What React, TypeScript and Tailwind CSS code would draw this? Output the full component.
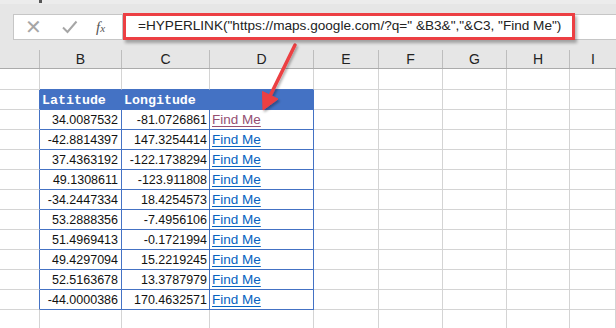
import React from "react";

const cols = [
  { key: "A", w: "w-[40px]" },
  { key: "B", w: "w-[82px]" },
  { key: "C", w: "w-[88px]" },
  { key: "D", w: "w-[104px]" },
  { key: "E", w: "w-[65px]" },
  { key: "F", w: "w-[64px]" },
  { key: "G", w: "w-[64px]" },
  { key: "H", w: "w-[63px]" },
  { key: "I", w: "flex-1" },
];

const rows: [string, string][] = [
  ["34.0087532", "-81.0726861"],
  ["-42.8814397", "147.3254414"],
  ["37.4363192", "-122.1738294"],
  ["49.1308611", "-123.911808"],
  ["-34.2447334", "18.4254573"],
  ["53.2888356", "-7.4956106"],
  ["51.4969413", "-0.1721994"],
  ["49.4297094", "15.2219245"],
  ["52.5163678", "13.3787979"],
  ["-44.0000386", "170.4632571"],
];

const cellFont = { fontFamily: '"Liberation Sans", Arial, sans-serif' };

function GridRow({
  h,
  children,
}: {
  h: string;
  children: (col: string, i: number) => React.ReactNode;
}) {
  return (
    <div className={`flex ${h}`}>
      {cols.map((c, i) => (
        <div key={c.key} className={`${c.w} shrink-0 h-full`}>
          {children(c.key, i)}
        </div>
      ))}
    </div>
  );
}

export default function App() {
  return (
    <div className="w-[616px] h-[328px] overflow-hidden relative bg-white" style={cellFont}>
      {/* top strip */}
      <div className="h-[4px] bg-[#ececec] relative">
        <div className="absolute left-[39px] top-0 w-[3px] h-[3px] bg-[#555]" />
      </div>

      {/* formula bar */}
      <div className="h-[44px] bg-[#e6e6e6] flex items-start pt-[9px] pl-[13px]">
        <div className="w-[110px] h-[26px] mt-[1px] bg-white border border-[#c6c6c6] flex items-center">
          <span className="w-[38px] text-center text-[20px] leading-none text-[#a6a6a6] font-light">✕</span>
          <svg width="18" height="16" viewBox="0 0 18 16" className="ml-[9px]">
            <path d="M2 8.5 L6.5 13 L15.5 2.5" fill="none" stroke="#a6a6a6" strokeWidth="2" />
          </svg>
          <span
            className="ml-[17px] text-[15px] italic text-[#555]"
            style={{ fontFamily: '"Liberation Serif", serif' }}
          >
            f<span className="text-[11px]">x</span>
          </span>
        </div>
        <div className="w-[452px] h-[27px] bg-white border-[3px] border-[#ec3f43] shadow-[2px_3px_3px_rgba(0,0,0,0.3)] flex items-center pl-[12px] relative z-10">
          <span className="text-[13.6px] text-[#222] whitespace-nowrap">
            =HYPERLINK("https://maps.google.com/?q=" &amp;B3&amp;","&amp;C3, "Find Me")
          </span>
        </div>
        <div className="flex-1 h-[26px] mt-[1px] bg-white border-y border-[#c6c6c6]" />
      </div>

      {/* column headers */}
      <div className="flex h-[21px] bg-[#e6e6e6] border-b border-[#ababab]">
        {cols.map((c, i) => (
          <div key={c.key} className={`${c.w} shrink-0 h-full pt-[2px]`}>
            <div
              className={`h-full flex items-center justify-center text-[14px] text-[#222] ${
                i < cols.length - 1 ? "border-r border-[#bdbdbd]" : ""
              }`}
            >
              {i === 0 ? "" : c.key}
            </div>
          </div>
        ))}
      </div>

      {/* row above the table */}
      <GridRow h="h-[21px]">
        {(k) => (
          <div
            className={`h-full border-r border-b ${
              k === "B" || k === "C" || k === "D" ? "border-b-[#4472c4]" : "border-b-[#d4d4d4]"
            } border-r-[#d4d4d4]`}
          />
        )}
      </GridRow>

      {/* table header row */}
      <GridRow h="h-[20px]">
        {(k) => {
          const inTable = k === "B" || k === "C" || k === "D";
          if (inTable)
            return (
              <div
                className="h-full bg-[#4472c4] border-b border-[#4472c4] flex items-end pl-[2px] pb-[2px] text-white font-bold text-[13.3px] leading-none"
                style={{ fontFamily: '"Liberation Mono", monospace' }}
              >
                {k === "B" ? "Latitude" : k === "C" ? "Longitude" : ""}
              </div>
            );
          return (
            <div
              className={`h-full border-r border-b border-b-[#d4d4d4] ${
                k === "A" ? "border-r-[#4472c4]" : "border-r-[#d4d4d4]"
              }`}
            />
          );
        }}
      </GridRow>

      {/* data rows */}
      {rows.map(([lat, lng], r) => (
        <GridRow key={r} h="h-[20px]">
          {(k) => {
            const inTable = k === "B" || k === "C" || k === "D";
            const rBorder =
              k === "A" || inTable ? "border-r-[#4472c4]" : "border-r-[#d4d4d4]";
            const bBorder = inTable ? "border-b-[#4472c4]" : "border-b-[#d4d4d4]";
            return (
              <div
                className={`h-full border-r border-b ${rBorder} ${bBorder} flex items-end pb-[3px] leading-none text-[#111] ${
                  k === "B" ? "justify-end pr-[3px]" : k === "C" ? "justify-end pr-[2px]" : "pl-[2px]"
                }`}
              >
                {k === "B" && <span className="text-[12.5px]">{lat}</span>}
                {k === "C" && <span className="text-[12.5px]">{lng}</span>}
                {k === "D" && (
                  <span
                    className={`text-[13.5px] underline underline-offset-[2px] ${
                      r === 0 ? "text-[#954f72]" : "text-[#0563c1]"
                    }`}
                  >
                    Find Me
                  </span>
                )}
              </div>
            );
          }}
        </GridRow>
      ))}

      {/* trailing row */}
      <GridRow h="h-[20px]">
        {() => <div className="h-full border-r border-b border-[#d4d4d4]" />}
      </GridRow>

      {/* annotation arrow */}
      <svg className="absolute left-0 top-0 pointer-events-none" width="616" height="328">
        <defs>
          <filter id="sh" x="-20%" y="-20%" width="140%" height="140%">
            <feDropShadow dx="1.5" dy="2" stdDeviation="1.2" floodColor="#000" floodOpacity="0.3" />
          </filter>
        </defs>
        <g filter="url(#sh)" fill="#ec3f43" stroke="#ec3f43">
          <line x1="295" y1="45" x2="270" y2="96" strokeWidth="3.5" strokeLinecap="round" />
          <polygon points="263,110 262.5,91.5 278,99" strokeWidth="1" strokeLinejoin="round" />
        </g>
      </svg>
    </div>
  );
}
